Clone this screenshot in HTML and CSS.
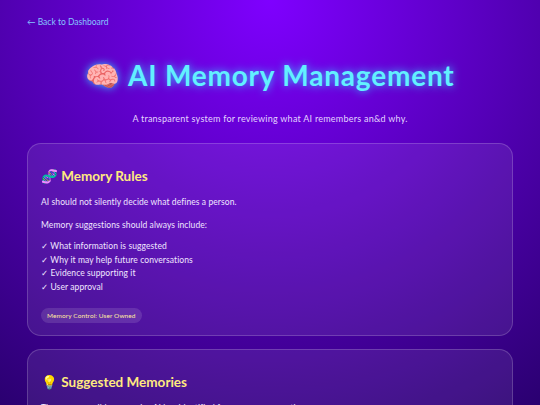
FILE: index.html
```html
<!DOCTYPE html>
<html lang="en">
<head>
<meta charset="utf-8">
<title>AI Memory Management</title>
<link rel="stylesheet" href="styles.css">
</head>
<body>
<a class="back" href="#">← Back to Dashboard</a>
<h1>🧠 AI Memory Management</h1>
<p class="subtitle">A transparent system for reviewing what AI remembers an&amp;d why.</p>
<section class="card">
<h2>🧬 Memory Rules</h2>
<p>AI should not silently decide what defines a person.</p>
<p>Memory suggestions should always include:</p>
<ul>
<li>✓ What information is suggested</li>
<li>✓ Why it may help future conversations</li>
<li>✓ Evidence supporting it</li>
<li>✓ User approval</li>
</ul>
<span class="pill">Memory Control: User Owned</span>
</section>
<section class="card">
<h2>💡 Suggested Memories</h2>
<p>These are possible memories AI has identified from your conversations.</p>
</section>
</body>
</html>
```
FILE: styles.css
```css
* { box-sizing: border-box; }
html { background: #2a006b; }
body {
  margin: 0;
  height: 405px;
  padding: 16px 27px 0;
  font-family: Lato, "DejaVu Sans", sans-serif;
  color: #f0e6ff;
  background: radial-gradient(circle at 50% 0, #7f00ff 0%, #2a0070 100%);
  overflow: hidden;
}
.back { display: block; font-size: 8.5px; line-height: 12px; color: #86c4ff; text-decoration: none; }
h1 {
  margin: 28px 0 0;
  font-size: 28px;
  line-height: 38px;
  font-weight: 700;
  letter-spacing: .8px;
  text-align: center;
  color: #62f0ff;
  text-shadow: 0 0 8px #33c8ff;
}
.subtitle { margin: 18px 0 0; font-size: 9px; letter-spacing: .24px; line-height: 14px; text-align: center; color: #e4d4ff; }
.card {
  margin-top: 13px;
  padding: 20px 13px 12px;
  border: 1px solid rgba(255,255,255,.18);
  border-radius: 14px;
  background: rgba(255,255,255,.08);
}
.subtitle + .card { margin-top: 17px; }
h2 { margin: 0; font-size: 13.5px; line-height: 24px; font-weight: 700; color: #ffe97f; }
.card p { margin: 7px 0 0; font-size: 8.5px; letter-spacing: .09px; line-height: 15px; }
.card p + p { margin-top: 8px; }
ul { list-style: none; margin: 7px 0 0; padding: 0; font-size: 8.5px; letter-spacing: .09px; line-height: 13.5px; }
.pill {
  display: inline-block;
  margin-top: 14px;
  padding: 0 6px;
  font-size: 6.5px;
  letter-spacing: .1px;
  line-height: 15px;
  color: #ffe9a0;
  border-radius: 8px;
  background: rgba(255,255,255,.12);
}
```
